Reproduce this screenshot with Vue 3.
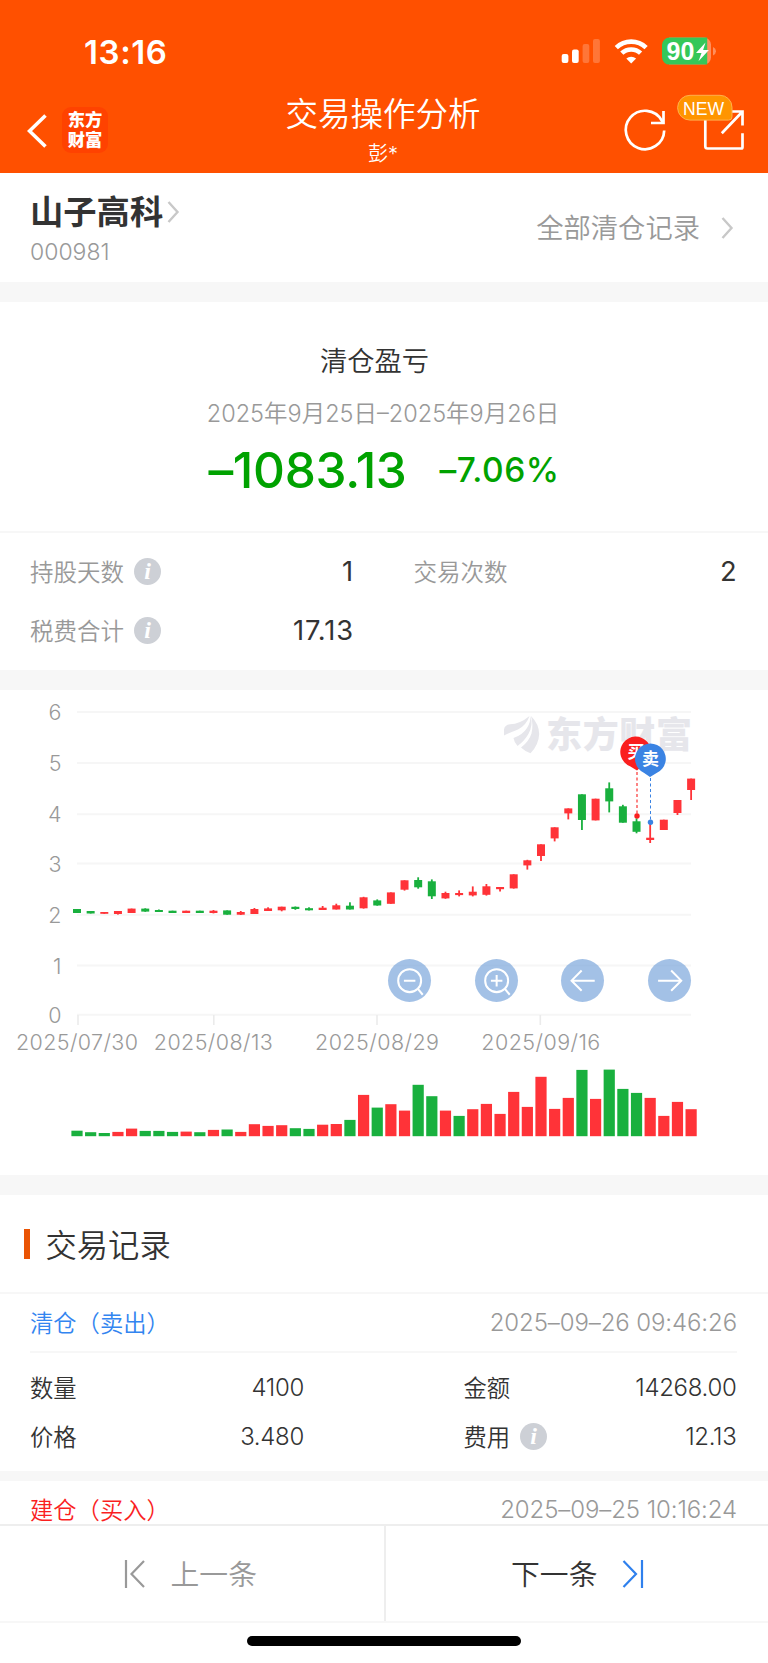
<script setup>
import { ref } from 'vue'

const stock = { name: '山子高科', code: '000981' }

// [实体顶, 实体底, 最高, 最低, 涨跌, 成交量高度, 成交量颜色(与K线不同时)]
const kline = [
  [219, 223, 219, 223, 'g', 5.5], [221, 223.5, 221, 223.5, 'g', 4], [222, 223.8, 222, 223.8, 'r', 3.2, 'g'],
  [221, 224, 221, 224.6, 'r', 4.3], [218.6, 223, 218.6, 223, 'r', 7.6], [218.6, 221.6, 218.3, 221.8, 'g', 5.3],
  [220, 222, 219.5, 222, 'g', 5.3], [220.7, 223, 220.7, 223, 'g', 4.3], [220.7, 223, 220.7, 223, 'r', 4.6],
  [220.7, 223, 220.7, 223, 'g', 4], [220.7, 223, 220, 223.4, 'r', 6.3], [220.4, 224.7, 220.4, 224.7, 'g', 6.7],
  [222, 224.7, 221, 225, 'r', 4.3], [219, 224, 218, 224, 'r', 12], [218.4, 221, 217.3, 221, 'r', 10.3],
  [216.7, 220.3, 216.7, 221.3, 'r', 11], [216.8, 219, 216.5, 219.8, 'g', 8], [218.2, 220.3, 217.3, 220.5, 'g', 7.3],
  [217.7, 220, 216, 220, 'r', 11.5], [215.3, 219.5, 213.7, 219.5, 'r', 12.2], [215.7, 219.5, 212.3, 219.5, 'g', 16.3],
  [207.3, 218.3, 206.8, 218.6, 'r', 41.3], [210.4, 215.5, 209.4, 215.7, 'g', 28.6], [202.4, 213.8, 202.4, 213.8, 'r', 32],
  [190.3, 199.7, 190.3, 200.6, 'r', 25.6], [190, 197.3, 187.3, 198.7, 'g', 51.4], [191.3, 206.3, 189.4, 209, 'g', 40],
  [203, 208.4, 201.7, 208.8, 'r', 25.6], [203, 205.1, 200.4, 206.4, 'r', 20.3, 'g'], [201.7, 205.4, 196.4, 206.4, 'r', 27],
  [196.3, 204.8, 194, 205.6, 'r', 32.3], [197, 199.2, 197, 201.5, 'r', 22.3], [184.3, 198.4, 184.3, 198.6, 'r', 44.3],
  [170.3, 175.4, 169.8, 179.6, 'r', 29.3], [154.3, 166, 154.3, 171, 'r', 59.4], [137.3, 148.4, 137.3, 151.4, 'r', 27.3],
  [118.4, 123.4, 118.4, 129.4, 'r', 38.3], [104.3, 130, 104.3, 140, 'g', 66.3], [108.7, 130.4, 108.7, 130.4, 'r', 37.3],
  [98.3, 111.4, 92.4, 122.4, 'g', 66.6], [116.3, 132.7, 114.8, 132.7, 'g', 47.3], [131.3, 141.8, 128.4, 143.3, 'g', 43.3],
  [147.7, 150, 134, 153, 'r', 38.3], [129.7, 140, 129.7, 140, 'r', 20.3], [110, 123, 110, 125, 'r', 34.3],
  [88.6, 100, 88.6, 110, 'r', 27]
].map(([top, bottom, high, low, color, vol, volColor]) => ({
  top, bottom, high, low, color, vol, volColor: volColor || color
}))
const candleX = (i) => 77 + i * 13.647

const yTicks = [
  { v: 6, y: 22 }, { v: 5, y: 73 }, { v: 4, y: 124.2 }, { v: 3, y: 173.5 },
  { v: 2, y: 224.7 }, { v: 1, y: 275.6 }, { v: 0, y: 324.7 }
]
const xTicks = [
  { t: '2025/07/30', x: 77, line: 78, w: 122 },
  { t: '2025/08/13', x: 213.3, line: 213.8, w: 119 },
  { t: '2025/08/29', x: 377, line: 377, w: 124 },
  { t: '2025/09/16', x: 540.8, line: 540.3, w: 119 }
]

const records = ref([
  { type: 'sell', title: '清仓（卖出）', time: '2025–09–26 09:46:26', detail: { qty: '4100', amount: '14268.00', price: '3.480', fee: '12.13' } },
  { type: 'buy', title: '建仓（买入）', time: '2025–09–25 10:16:24' }
])
</script>

<template>
  <div class="page">
    <header class="header">
      <div class="status">
        <span class="time">13:16</span>
        <svg class="status-icons" width="160" height="32" viewBox="558 35 160 32">
          <g fill="#fff">
            <rect x="561.7" y="54" width="6.7" height="9" rx="2" />
            <rect x="572" y="49.5" width="6.7" height="13.5" rx="2" />
            <rect x="582.6" y="44" width="6.7" height="19" rx="2" opacity=".22" />
            <rect x="593" y="39" width="6.9" height="24" rx="2" opacity=".22" />
          </g>
          <g fill="none" stroke="#fff" stroke-width="4.6">
            <path d="M616.3 47.6a21.5 21.5 0 0 1 29.8 0" />
            <path d="M621.8 53.2a13.6 13.6 0 0 1 18.8 0" />
          </g>
          <path d="M626.3 58.6a7.2 7.2 0 0 1 9.8 0l-4.9 4.8z" fill="#fff" />
          <path d="M669 37.6h35a7 7 0 0 1 7 7v13a7 7 0 0 1-7 7h-35z" fill="#ff8f5c" />
          <path d="M669.5 37.6h37.7v27h-37.7a7.5 7.5 0 0 1-7.5-7.5v-12a7.5 7.5 0 0 1 7.5-7.5z" fill="#34c759" />
          <path d="M713 47q3 1.500 3 4.200t-3 4.200z" fill="#ff8f5c" />
          <text x="666.500" y="60" class="battery">90</text>
          <path d="M705.500 42.500l-9.500 10.400h5.500l-3 8.300 10.400-11.200h-5.800z" fill="#fff" />
        </svg>
      </div>
      <div class="nav">
        <div class="nav-left">
          <svg class="back" width="20" height="38" viewBox="27 112 20 38">
            <path d="M45.500 115.500L29.500 131l16 15.500" fill="none" stroke="#fff" stroke-width="3.600" />
          </svg>
          <div class="logo"><span>东方</span><span>财富</span></div>
        </div>
        <div class="nav-title">
          <h1>交易操作分析</h1>
          <p>彭*</p>
        </div>
        <svg class="nav-icons" width="124" height="60" viewBox="622 94 124 60">
          <g fill="none" stroke="#fff" stroke-width="2.700">
            <path d="M664.200 130.500a19.200 19.200 0 1 1-2.500-10l1.500 2.500" />
            <path d="M663.500 111v12H651" />
            <path d="M705.300 118v28.300q0 2.200 2.200 2.200H741.300q1.200 0 1.200-1.200V133.300" />
            <path d="M729 111.500h13.500v14M742.300 111.700l-20.500 21.500" />
          </g>
          <path d="M690 95.300h30a12 12 0 0 1 12 12v9.500q0 3.300-3.300 3.300H690a12.400 12.400 0 0 1 0-24.800z" fill="#ff9500" stroke="#ffb04d" stroke-width="1" />
          <text x="683" y="114.500" class="new">NEW</text>
        </svg>
      </div>
    </header>

    <section class="stock">
      <div>
        <div class="stock-name">
          {{ stock.name }}
          <svg width="13" height="24" viewBox="0 0 13 24"><path d="M1.500 2l9 10-9 10" fill="none" stroke="#c8c8c8" stroke-width="2.400" /></svg>
        </div>
        <div class="stock-code">{{ stock.code }}</div>
      </div>
      <div class="all">
        <span>全部清仓记录</span>
        <svg width="13" height="24" viewBox="0 0 13 24"><path d="M1.500 2l9 10-9 10" fill="none" stroke="#c8c8c8" stroke-width="2.400" /></svg>
      </div>
    </section>

    <section class="profit">
      <h2>清仓盈亏</h2>
      <p class="range">2025年9月25日–2025年9月26日</p>
      <div class="nums"><b class="big">–1083.13</b><b class="pct">–7.06%</b></div>
    </section>

    <section class="stats">
      <div class="stat"><span>持股天数</span><i class="info">i</i><em>1</em></div>
      <div class="stat"><span>交易次数</span><em>2</em></div>
      <div class="stat"><span>税费合计</span><i class="info">i</i><em>17.13</em></div>
    </section>

    <section class="chart">
      <svg width="768" height="485" viewBox="0 0 768 485">
        <g v-for="t in yTicks" :key="t.v">
          <line x1="77" x2="691" :y1="t.y" :y2="t.y" stroke="#f6f6f6" stroke-width="2" />
          <text x="61.500" :y="t.y + 8" class="axis" text-anchor="end">{{ t.v }}</text>
        </g>
        <g v-for="t in xTicks" :key="t.t">
          <line :x1="t.line" :x2="t.line" y1="325" y2="335" stroke="#ebebeb" stroke-width="1.600" />
          <text :x="t.x" y="360" class="axis" text-anchor="middle" :textLength="t.w">{{ t.t }}</text>
        </g>

        <!-- 水印 -->
        <g fill="#e6e6eb">
          <path d="M504 45.500V39.500q.5-4.500 6-5.200 10-.3 19.500-8.300-3 9-11.500 13.500-7 2.500-14 6z" />
          <path d="M513.500 48q9-3 13.500-10 3.800-6 3.400-12 3 9-2 18-4 7-10.900 12-3.500-4-4-8z" />
          <path d="M521 57.500q8-6 10.500-14 2-9-.5-17.500 8 8 8.200 18-.5 11-8.700 19.300-5-1.500-9.500-5.800z" />
          <text x="546" y="58" class="mark" textLength="146">东方财富</text>
        </g>

        <g v-for="(k, i) in kline" :key="i">
          <rect :class="k.color" :x="candleX(i) - 4" :y="k.top" width="8" :height="k.bottom - k.top" />
          <rect :class="k.color" :x="candleX(i) - 0.900" :y="k.high" width="1.800" :height="k.low - k.high" />
          <rect :class="k.volColor" :x="candleX(i) - 5.600" :y="446.200 - k.vol" width="11.200" :height="k.vol" />
        </g>

        <g fill="#fa1f1f">
          <path d="M637 80.500l-7-4.200a15.400 15.400 0 1 1 12.500-.5z" />
          <circle cx="637" cy="126" r="2.700" />
          <line x1="637" x2="637" y1="82" y2="124" stroke="#fa1f1f" stroke-width="1.100" stroke-dasharray="3 2.500" />
        </g>
        <text x="636" y="68" class="pin">买</text>
        <g fill="#3a83e3">
          <path d="M650 87l-6.200-4.200a15.400 15.400 0 1 1 13.200 0z" />
          <circle cx="650.500" cy="132.300" r="2.700" />
          <line x1="650.500" x2="650.500" y1="88" y2="130" stroke="#3a83e3" stroke-width="1" stroke-dasharray="3 2.500" />
        </g>
        <text x="650.500" y="75" class="pin">卖</text>
      </svg>
      <div class="tools">
        <button><svg viewBox="0 0 43 43"><circle cx="21.500" cy="21.500" r="11.400" /><path d="M15.800 21.500h11.400M29.500 29.500l5 6" /></svg></button>
        <button><svg viewBox="0 0 43 43"><circle cx="21.500" cy="21.500" r="11.400" /><path d="M15.800 21.500h11.400M21.500 15.800v11.400M29.500 29.500l5 6" /></svg></button>
        <button><svg viewBox="0 0 43 43"><path d="M33.500 21.500h-23M20.500 11.500l-10 10 10 10" /></svg></button>
        <button><svg viewBox="0 0 43 43"><path d="M10 21.500h23M23 11.500l10 10-10 10" /></svg></button>
      </div>
    </section>

    <section class="records">
      <h3>交易记录</h3>
      <div v-for="r in records" :key="r.time" class="record">
        <div class="record-head">
          <span :class="r.type">{{ r.title }}</span>
          <time>{{ r.time }}</time>
        </div>
        <div v-if="r.detail" class="record-body">
          <div class="cell"><span>数量</span><em>{{ r.detail.qty }}</em></div>
          <div class="cell"><span>金额</span><em>{{ r.detail.amount }}</em></div>
          <div class="cell"><span>价格</span><em>{{ r.detail.price }}</em></div>
          <div class="cell"><span>费用</span><i class="info">i</i><em>{{ r.detail.fee }}</em></div>
        </div>
      </div>
    </section>

    <footer class="footer">
      <div class="pager">
        <div class="prev">
          <svg width="22" height="30" viewBox="0 0 22 30"><path d="M2 1v28M20 2L7.500 15 20 28" fill="none" stroke="#999" stroke-width="2.200" /></svg>
          <span>上一条</span>
        </div>
        <div class="next">
          <span>下一条</span>
          <svg width="22" height="30" viewBox="0 0 22 30"><path d="M20 1v28M1.500 2L14 15 1.500 28" fill="none" stroke="#2f80ed" stroke-width="2.200" /></svg>
        </div>
      </div>
      <div class="home"></div>
    </footer>
  </div>
</template>

<style>
body { background: #fff; }
</style>

<style scoped>
* { box-sizing: border-box; margin: 0; padding: 0; }
.page { width: 768px; height: 1663px; overflow: hidden; display: flex; flex-direction: column; background: #f7f7f7; color: #333; font-family: Inter, "Noto Sans CJK SC", sans-serif; font-weight: 350; }
.page > * { flex-shrink: 0; }
em { font-style: normal; }
svg { display: block; }

.header { height: 173px; background: #ff5000; color: #fff; }
.status { height: 94px; display: flex; justify-content: space-between; padding: 35px 50px 0 84px; }
.time { font-size: 33px; font-weight: 600; line-height: 34px; letter-spacing: 0.600px; }
.battery { font: 700 25px "Liberation Sans", sans-serif; fill: #fff; }
.nav { display: flex; justify-content: space-between; padding: 0 22px 0 27px; }
.nav-left { width: 117px; display: flex; gap: 15px; }
.back { margin-top: 18px; }
.logo { margin-top: 13px; width: 46px; height: 46px; border-radius: 9px; background: #ff4200; display: flex; flex-direction: column; align-items: center; justify-content: center; font-size: 17.300px; font-weight: 900; line-height: 20px; }
.nav-title { text-align: center; padding-top: 1px; }
.nav-title h1 { font-size: 32.500px; font-weight: 350; line-height: 40px; }
.nav-title p { font-size: 20px; line-height: 24px; margin-top: 7px; }
.new { font: 400 17.600px "Liberation Sans", sans-serif; fill: #fff; }

.stock { height: 109px; background: #fff; display: flex; justify-content: space-between; padding: 0 34px 0 30px; }
.stock-name { display: flex; align-items: center; gap: 4px; font-size: 33.300px; font-weight: 600; line-height: 40px; margin-top: 19px; }
.stock-code { font-size: 23px; line-height: 26px; margin-top: 7px; color: #999; }
.all { display: flex; align-items: center; gap: 21px; color: #999; font-size: 27.300px; }
.all span { padding-bottom: 3px; }

.profit { margin-top: 20px; height: 229px; background: #fff; text-align: center; }
.profit h2 { font-size: 27.300px; font-weight: 350; line-height: 40px; padding: 40px 19px 0 0; }
.range { font-size: 23.500px; line-height: 30px; margin: 17px 2px 0 0; color: #999; }
.nums { display: flex; justify-content: center; align-items: center; gap: 33px; height: 60px; margin-top: 11px; color: #00a200; }
.nums b { font-weight: 500; }
.big { font-size: 49.500px; letter-spacing: -0.300px; }
.pct { font-size: 33.500px; letter-spacing: 0.500px; }

.stats { height: 139px; border-top: 2px solid #f7f7f7; background: #fff; display: grid; grid-template-columns: 323px 323px; column-gap: 60.500px; grid-auto-rows: 59px; padding: 9px 31px 0 30px; }
.stat, .cell { display: flex; align-items: center; }
.stat span { font-size: 23.500px; color: #999; padding-bottom: 2px; }
.stat em { margin: 0 -1px 0 auto; font-size: 27.300px; letter-spacing: 0.900px; font-weight: 370; }
.info { width: 27px; height: 27px; border-radius: 50%; margin-left: 10px; background: #cdd0d6; color: #fff; font: italic bold 24px/27px "Liberation Serif", serif; text-align: center; }

.chart { margin-top: 20px; height: 485px; background: #fff; position: relative; }
.axis { font: 350 21.500px Inter, sans-serif; fill: #999; }
.mark { font: 900 36px "Noto Sans CJK SC", sans-serif; }
.pin { font: 700 17px "Noto Sans CJK SC", sans-serif; fill: #fff; text-anchor: middle; }
.r { fill: #ff3338; }
.g { fill: #19b03e; }
.tools { position: absolute; left: 388px; top: 269px; display: flex; gap: 43.300px; }
.tools button { width: 43.300px; height: 43.300px; border: 0; border-radius: 50%; background: rgba(120, 164, 218, 0.680); }
.tools svg { fill: none; stroke: #fff; stroke-width: 2; }

.records { margin-top: 20px; height: 329px; overflow: hidden; }
.records h3 { height: 99px; border-bottom: 2px solid #f7f7f7; background: #fff; display: flex; align-items: center; gap: 15.500px; padding-left: 23.500px; font-size: 31.300px; font-weight: 350; }
.records h3::before { content: ""; width: 6.500px; height: 30px; background: #ea5404; }
.record { background: #fff; padding: 0 31px 0 30px; margin-bottom: 10px; }
.record-head { height: 59px; border-bottom: 2px solid #f7f7f7; display: flex; justify-content: space-between; align-items: center; font-size: 23.300px; }
.record-head span { padding-bottom: 2px; }
.record-head time { color: #999; font-size: 24px; letter-spacing: -0.100px; }
.sell { color: #3385f0; }
.buy { color: #fa1f1f; }
.record-body { height: 118px; padding-top: 10px; display: grid; grid-template-columns: 274px 273px; column-gap: 159.500px; grid-auto-rows: 49px; }
.cell span { font-size: 23.300px; padding-bottom: 2px; }
.cell em { margin-left: auto; font-size: 24px; letter-spacing: -0.300px; }

.footer { height: 139px; background: #fff; border-top: 2px solid #eee; }
.pager { height: 97px; border-bottom: 2px solid #f7f7f7; display: flex; font-size: 28.800px; }
.pager span { padding-bottom: 3px; }
.prev, .next { flex: 1; display: flex; align-items: center; justify-content: center; gap: 25px; }
.prev { color: #999; border-right: 2px solid #eee; padding-right: 3px; }
.next { color: #333; padding-left: 2px; }
.home { width: 274px; height: 10px; border-radius: 5px; margin: 13px auto 0; background: #000; }
</style>
